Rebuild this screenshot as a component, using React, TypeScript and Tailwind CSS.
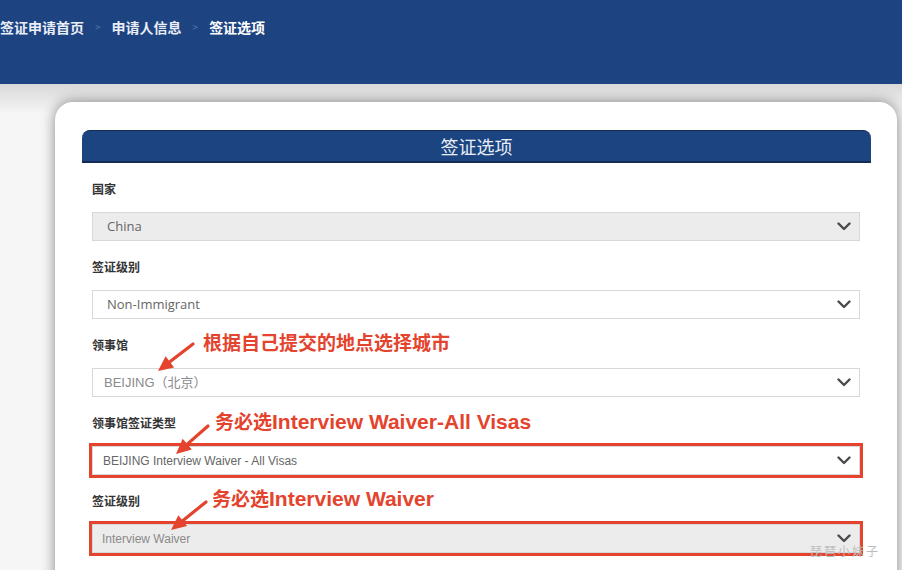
const cjk = "font-['Noto_Sans_CJK_SC',sans-serif]";

type FieldProps = {
  label: string;
  value: string;
  filled?: boolean;
  flagged?: boolean;
  valueClass: string;
};

function Chevron() {
  return (
    <svg width="14" height="9" viewBox="0 0 14 9" className="shrink-0" aria-hidden="true">
      <path d="M1.5 1.5 L7 7 L12.5 1.5" fill="none" stroke="#4a4a4a" strokeWidth="2.4" strokeLinecap="round" strokeLinejoin="round" />
    </svg>
  );
}

function Field({ label, value, filled, flagged, valueClass }: FieldProps) {
  return (
    <div>
      <div className={`flex h-[49px] items-center pt-[2px] text-[12px] font-bold text-[#333] ${cjk}`}>
        {label}
      </div>
      <div
        className={`flex h-[29px] items-center justify-between border border-[#d8d8d8] pr-[8px] ${
          filled ? "bg-[#ececec]" : "bg-white"
        } ${flagged ? "ring-[3px] ring-[#e4432d]" : ""}`}
      >
        <span className={valueClass}>{value}</span>
        <Chevron />
      </div>
    </div>
  );
}

function Arrow({ x1, y1, x2, y2 }: { x1: number; y1: number; x2: number; y2: number }) {
  const a = Math.atan2(y2 - y1, x2 - x1);
  const len = 15;
  const w = 7;
  const bx = x2 - Math.cos(a) * len;
  const by = y2 - Math.sin(a) * len;
  const px = -Math.sin(a) * w;
  const py = Math.cos(a) * w;
  return (
    <g>
      <line x1={x1} y1={y1} x2={bx} y2={by} stroke="#e4432d" strokeWidth="3.2" strokeLinecap="round" />
      <polygon points={`${x2},${y2} ${bx + px},${by + py} ${bx - px},${by - py}`} fill="#e4432d" />
    </g>
  );
}

function Note({ zh, en, className }: { zh: string; en?: string; className: string }) {
  return (
    <span className={`absolute flex items-baseline whitespace-nowrap font-bold text-[#e4432d] ${className}`}>
      <span className={`text-[19px] ${cjk}`}>{zh}</span>
      {en && <span className="text-[21px] font-['Liberation_Sans',sans-serif]">{en}</span>}
    </span>
  );
}

export default function App() {
  return (
    <div className="h-[570px] w-[902px] overflow-hidden bg-[#f6f6f6]">
      <header className="h-[84px] bg-[#1d4380]">
        <nav className={`flex items-center gap-[11px] pt-[17px] text-[14px] font-bold leading-[20px] ${cjk}`}>
          <span className="text-[#e9eef7]">签证申请首页</span>
          <span className="text-[10px] font-normal text-[#5a78a8]">&gt;</span>
          <span className="text-[#e9eef7]">申请人信息</span>
          <span className="text-[10px] font-normal text-[#5a78a8]">&gt;</span>
          <span className="text-white">签证选项</span>
        </nav>
      </header>

      <div className="bg-gradient-to-b from-[#d9d9d9] to-[#f6f6f6] to-[30px] pl-[55px] pr-[5px] pt-[18px]">
        <section className="relative h-[500px] rounded-t-[18px] bg-white pl-[27px] pr-[26px] pt-[28px] shadow-[0_0_14px_rgba(0,0,0,0.45)]">
          <div
            className={`flex h-[33px] items-center justify-center rounded-t-[8px] border-b-2 border-t border-[#122c57] bg-[#1b4480] text-[18px] text-[#e8edf6] ${cjk}`}
          >
            签证选项
          </div>

          <div className="px-[10px] pr-[11px]">
            <Field
              label="国家"
              value="China"
              filled
              valueClass="pl-[14px] text-[13px] text-[#666] font-['Open_Sans',sans-serif]"
            />
            <Field
              label="签证级别"
              value="Non-Immigrant"
              valueClass="pl-[14px] text-[13px] text-[#666] font-['Open_Sans',sans-serif]"
            />
            <Field
              label="领事馆"
              value="BEIJING（北京）"
              valueClass={`pl-[11px] text-[13px] text-[#8a8a8a] font-['Liberation_Sans','Noto_Sans_CJK_SC',sans-serif]`}
            />
            <Field
              label="领事馆签证类型"
              value="BEIJING Interview Waiver - All Visas"
              flagged
              valueClass="pl-[10px] text-[12px] text-[#666] font-['Liberation_Sans',sans-serif]"
            />
            <Field
              label="签证级别"
              value="Interview Waiver"
              filled
              flagged
              valueClass="pl-[9px] text-[12px] text-[#8a8a8a] font-['Liberation_Sans',sans-serif]"
            />
          </div>

          <Note zh="根据自己提交的地点选择城市" className="left-[148px] top-[226px]" />
          <Note zh="务必选" en="Interview Waiver-All Visas" className="left-[160px] top-[304px]" />
          <Note zh="务必选" en="Interview Waiver" className="left-[157px] top-[381px]" />

          <svg className="pointer-events-none absolute left-0 top-0" width="842" height="470" aria-hidden="true">
            <Arrow x1={138} y1={242} x2={103} y2={269} />
            <Arrow x1={153} y1={324} x2={121} y2={352} />
            <Arrow x1={151} y1={400} x2={116} y2={428} />
          </svg>

          <span className="absolute left-[755px] top-[440px] text-[12px] tracking-[2px] text-[#bdbdbd] font-['Noto_Sans_CJK_SC',serif]">
            琵琶小妹子
          </span>
        </section>
      </div>
    </div>
  );
}
